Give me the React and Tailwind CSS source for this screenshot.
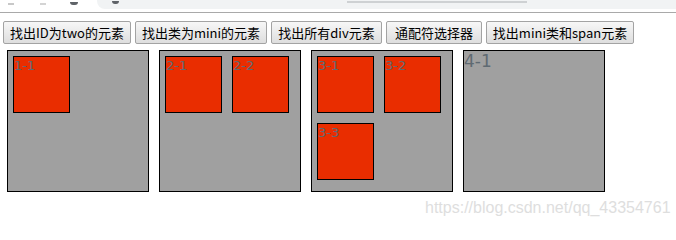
export default function App() {
  const buttons = [
    { label: "找出ID为two的元素", w: "w-[128px]" },
    { label: "找出类为mini的元素", w: "w-[132px]" },
    { label: "找出所有div元素", w: "w-[111px]" },
    { label: "通配符选择器", w: "w-[96px]" },
    { label: "找出mini类和span元素", w: "w-[148px]" },
  ];

  const boxes = [["1-1"], ["2-1", "2-2"], ["3-1", "3-2", "3-3"]];

  return (
    <div className="relative w-[676px] h-[225px] overflow-hidden bg-white">
      {/* browser chrome strip */}
      <div className="h-[13px] border-b border-[#a9a9a9] bg-white flex items-start pl-[8px]">
        <div className="w-[6px] h-[2px] mt-[3px] bg-[#c8c8c8]" />
        <div className="w-[6px] h-[2px] mt-[3px] ml-[26px] bg-[#d4d4d4]" />
        <div className="w-[8px] h-[3px] mt-[2px] ml-[24px] rounded-b-full bg-[#5f6368]" />
        <div className="flex-1 h-[9px] ml-[19px] rounded-bl-[8px] bg-[#f1f3f4] flex items-start pl-[15px]">
          <div className="w-[7px] h-[3px] mt-[1px] rounded-b-full bg-[#5f6368]" />
          <div className="w-[180px] h-[2px] mt-[1px] ml-[228px] bg-[#b8babd] opacity-60" />
        </div>
      </div>

      {/* buttons */}
      <div className="flex gap-[4px] pl-[3px] pt-[8px]">
        {buttons.map((b) => (
          <button
            key={b.label}
            className={`${b.w} h-[23px] flex items-center justify-center border border-[#a3a3a3] rounded-[2px] bg-gradient-to-b from-[#f7f7f7] to-[#dedede] text-[13px] text-black font-['Noto_Sans_CJK_SC',sans-serif] leading-none whitespace-nowrap`}
          >
            {b.label}
          </button>
        ))}
      </div>

      {/* boxes */}
      <div className="flex gap-[10px] pl-[7px] pt-[6px]">
        {boxes.map((items, i) => (
          <div
            key={i}
            className="w-[142px] h-[142px] border border-black bg-[#a0a0a0] p-[5px] flex flex-wrap content-start gap-[10px]"
          >
            {items.map((t) => (
              <div
                key={t}
                className="w-[57px] h-[57px] border border-black bg-[#e92d00] text-[13px] leading-[16px] text-[#5f6a72] font-['DejaVu_Sans',sans-serif] pt-[1px]"
              >
                {t}
              </div>
            ))}
          </div>
        ))}
        <div className="w-[142px] h-[142px] border border-black bg-[#a0a0a0] text-[17px] leading-[20px] text-[#5f6a72] font-['DejaVu_Sans',sans-serif]">
          4-1
        </div>
      </div>

      {/* watermark */}
      <div className="absolute left-[425px] top-[196px] text-[16px] text-[#dedede] font-['Liberation_Sans',sans-serif] [text-shadow:0_0_1px_#fff]">
        https://blog.csdn.net/qq_43354761
      </div>
    </div>
  );
}
